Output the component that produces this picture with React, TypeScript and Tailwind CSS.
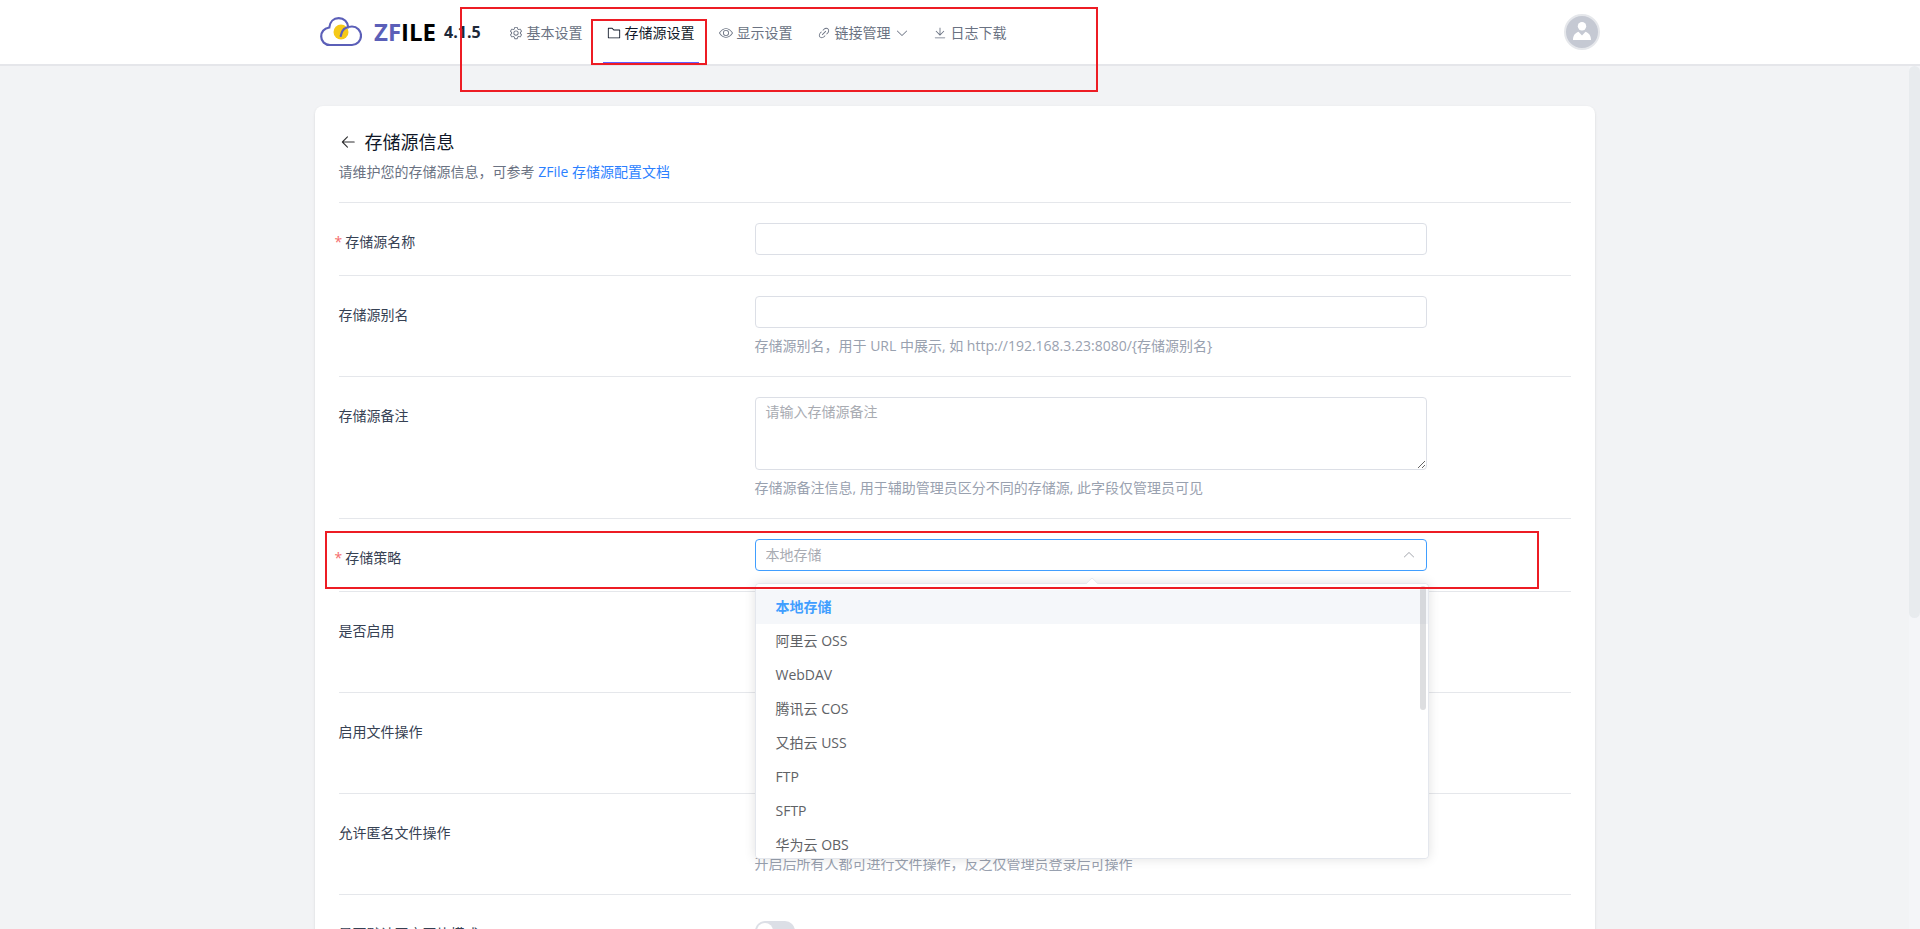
import clsx from 'clsx';
import { useState, type ReactNode } from 'react';

const icons = {
  setting:
    'M600.704 64a32 32 0 0 1 30.464 22.208l35.2 109.376c14.784 7.232 28.928 15.36 42.432 24.512l112.384-24.192a32 32 0 0 1 34.432 15.36L944.32 364.8a32 32 0 0 1-4.032 37.504l-77.12 85.12a357.12 357.12 0 0 1 0 49.024l77.12 85.248a32 32 0 0 1 4.032 37.504l-88.704 153.6a32 32 0 0 1-34.432 15.296L708.8 803.904c-13.44 9.088-27.648 17.28-42.368 24.512l-35.264 109.376A32 32 0 0 1 600.704 960H423.296a32 32 0 0 1-30.464-22.208L357.696 828.48a351.616 351.616 0 0 1-42.56-24.64l-112.32 24.256a32 32 0 0 1-34.432-15.36L79.68 659.2a32 32 0 0 1 4.032-37.504l77.12-85.248a357.12 357.12 0 0 1 0-48.896l-77.12-85.248A32 32 0 0 1 79.68 364.8l88.704-153.6a32 32 0 0 1 34.432-15.296l112.32 24.256c13.568-9.152 27.776-17.408 42.56-24.64l35.2-109.312A32 32 0 0 1 423.232 64H600.64zm-23.424 64H446.72l-36.352 113.088-24.512 11.968a294.113 294.113 0 0 0-34.816 20.096l-22.656 15.36-116.224-25.088-65.28 113.152 79.68 88.192-1.92 27.136a293.12 293.12 0 0 0 0 40.192l1.92 27.136-79.808 88.192 65.344 113.152 116.224-25.024 22.656 15.296a294.113 294.113 0 0 0 34.816 20.096l24.512 11.968L446.72 896h130.688l36.48-113.152 24.448-11.904a288.282 288.282 0 0 0 34.752-20.096l22.592-15.296 116.288 25.024 65.28-113.152-79.744-88.192 1.92-27.136a293.12 293.12 0 0 0 0-40.256l-1.92-27.136 79.808-88.128-65.344-113.152-116.288 24.96-22.592-15.232a287.616 287.616 0 0 0-34.752-20.096l-24.448-11.904L577.344 128zM512 320a192 192 0 1 1 0 384 192 192 0 0 1 0-384zm0 64a128 128 0 1 0 0 256 128 128 0 0 0 0-256z',
  folder:
    'M128 192v640h768V320H485.76L357.504 192H128zm-32-64h287.872l128.384 128H928a32 32 0 0 1 32 32v576a32 32 0 0 1-32 32H96a32 32 0 0 1-32-32V160a32 32 0 0 1 32-32z',
  view: 'M512 160c320 0 512 352 512 352S832 864 512 864 0 512 0 512s192-352 512-352zm0 64c-225.28 0-384.128 208.064-436.8 288 52.608 79.872 211.456 288 436.8 288 225.28 0 384.128-208.064 436.8-288-52.608-79.872-211.456-288-436.8-288zm0 64a224 224 0 1 1 0 448 224 224 0 0 1 0-448zm0 64a160.192 160.192 0 0 0-160 160c0 88.192 71.744 160 160 160s160-71.808 160-160-71.744-160-160-160z',
  link: 'M715.648 625.152 670.4 579.904l90.496-90.56c75.008-74.944 85.12-186.368 22.656-248.896-62.528-62.464-173.952-52.352-248.96 22.656L444.16 353.6l-45.248-45.248 90.496-90.496c100.032-99.968 251.968-110.08 339.456-22.656 87.488 87.488 77.312 239.424-22.656 339.456l-90.496 90.496zm-90.496 90.496-90.496 90.496C434.624 906.112 282.688 916.224 195.2 828.8c-87.488-87.488-77.312-239.424 22.656-339.456l90.496-90.496 45.248 45.248-90.496 90.56c-75.008 74.944-85.12 186.368-22.656 248.896 62.528 62.464 173.952 52.352 248.96-22.656l90.496-90.496 45.248 45.248zm0-362.048 45.248 45.248L398.848 670.4 353.6 625.152 625.152 353.6z',
  download:
    'M160 832h704a32 32 0 1 1 0 64H160a32 32 0 1 1 0-64zm384-253.696 236.288-236.352 45.248 45.248L508.8 704 192 387.2l45.248-45.248L480 584.704V128h64v450.304z',
  arrowDown:
    'M831.872 340.864 512 652.672 192.128 340.864a30.592 30.592 0 0 0-42.752 0 29.12 29.12 0 0 0 0 41.6L489.664 714.24a32 32 0 0 0 44.672 0l340.288-331.712a29.12 29.12 0 0 0 0-41.728 30.592 30.592 0 0 0-42.752 0z',
  back: 'M224 480h640a32 32 0 1 1 0 64H224a32 32 0 0 1 0-64zM237.248 512l265.408 265.344a32 32 0 0 1-45.312 45.312l-288-288a32 32 0 0 1 0-45.312l288-288a32 32 0 1 1 45.312 45.312L237.248 512z',
};

type IconName = keyof typeof icons;

function Icon({ name, className }: { name: IconName; className?: string }) {
  return (
    <svg
      viewBox="0 0 1024 1024"
      fill="currentColor"
      aria-hidden="true"
      className={clsx('shrink-0', className)}
    >
      <path d={icons[name]} />
    </svg>
  );
}

const navItems: { icon: IconName; label: string; active?: boolean; menu?: boolean }[] = [
  { icon: 'setting', label: '基本设置' },
  { icon: 'folder', label: '存储源设置', active: true },
  { icon: 'view', label: '显示设置' },
  { icon: 'link', label: '链接管理', menu: true },
  { icon: 'download', label: '日志下载' },
];

const strategies = [
  '本地存储',
  '阿里云 OSS',
  'WebDAV',
  '腾讯云 COS',
  '又拍云 USS',
  'FTP',
  'SFTP',
  '华为云 OBS',
];

function Logo() {
  return (
    <a href="#" className="flex items-center">
      <svg viewBox="0 0 42 30" fill="none" aria-hidden="true" className="h-[30px] w-[42px]">
        <circle cx="21" cy="15" r="7.5" fill="#f5c918" />
        <path
          d="M10 28h22c5 0 9-4 9-9.200s-4-9.300-9-9.300c-6.500 0-10.500 3.500-11.300 9.500M28.300 10.500C28 5 24 1.200 18.700 1.200c-5.200 0-8.800 3.500-9.400 9.300C4.500 11.500 1.200 14.500 1.200 19.500 1.200 24.500 5 28 10 28"
          stroke="#5b5fb8"
          strokeWidth="2.2"
          strokeLinecap="round"
        />
      </svg>
      <span className="ml-3 text-2xl font-bold text-black">
        <span className="text-[#5b5fb8]">ZF</span>ILE
      </span>
      <span className="ml-2 text-base font-bold text-gray-800">4.1.5</span>
    </a>
  );
}

function Header() {
  return (
    <header className="relative z-20 border-b-2 border-[#e5e6ea] bg-white">
      <div className="relative mx-auto flex h-16 max-w-[1280px] items-center justify-between">
        <div className="flex h-full items-center gap-6">
          <Logo />
          <nav className="flex h-full gap-4 text-sm">
            {navItems.map((item) => (
              <a
                key={item.label}
                href="#"
                className={clsx(
                  'relative flex items-center gap-1 border-b-2 px-1 pt-1',
                  item.active
                    ? 'border-indigo-500 text-gray-900'
                    : 'border-transparent text-gray-500',
                )}
              >
                <Icon name={item.icon} className="size-3.5" />
                {item.label}
                {item.menu && <Icon name="arrowDown" className="size-3.5" />}
                {item.active && (
                  <span className="pointer-events-none absolute top-[19px] -right-2 -bottom-[3px] -left-3 border-2 border-[#ed1c24]" />
                )}
              </a>
            ))}
          </nav>
        </div>
        <button
          type="button"
          aria-label="用户"
          className="size-9 overflow-hidden rounded-full border-2 border-gray-200 bg-[#c5c9d3]"
        >
          <svg viewBox="0 0 32 32" fill="#fff" aria-hidden="true">
            <circle cx="16" cy="10.300" r="4.200" />
            <path d="M7 24c0-4.500 2.200-7.200 5.500-8.300L16 19.500l3.500-3.800C22.800 16.800 25 19.500 25 24z" />
          </svg>
        </button>
        <div className="pointer-events-none absolute top-[7px] left-[140px] h-[85px] w-[638px] border-2 border-[#ed1c24]" />
      </div>
    </header>
  );
}

type RowProps = {
  id: string;
  label: string;
  required?: boolean;
  help?: string;
  marked?: boolean;
  children: ReactNode;
};

function Row({ id, label, required, help, marked, children }: RowProps) {
  return (
    <div className="relative grid grid-cols-3 gap-4 border-t border-gray-200 py-5 text-sm leading-5">
      <label htmlFor={id} className="pt-[9px] text-gray-700">
        {required && <span className="mr-[3px] -ml-1 text-[#f56c6c]">*</span>}
        {label}
      </label>
      <div className="col-span-2">
        <div className="max-w-2xl">{children}</div>
        {help && <p className="mt-2 text-gray-400">{help}</p>}
      </div>
      {marked && (
        <div className="pointer-events-none absolute top-3 right-8 bottom-0.5 -left-3.5 z-20 border-2 border-[#ed1c24]" />
      )}
    </div>
  );
}

function Switch({ id, tall }: { id: string; tall?: boolean }) {
  return (
    <div className={clsx(tall && 'min-h-[60px]')}>
      <div className="flex h-8 items-center">
        <input
          id={id}
          type="checkbox"
          role="switch"
          className="h-5 w-10 appearance-none rounded-full bg-[#dcdfe6] p-0.5 before:block before:size-4 before:rounded-full before:bg-white checked:bg-[#409eff] checked:before:ml-5"
        />
      </div>
    </div>
  );
}

function StrategySelect() {
  const [value, setValue] = useState(strategies[0]);

  return (
    <div className="relative">
      <select
        id="strategy"
        value={value}
        onChange={(e) => setValue(e.target.value)}
        className="block h-8 w-full appearance-none rounded border border-[#409eff] bg-white px-2.5 text-[#a8abb2] outline-none"
      >
        {strategies.map((name) => (
          <option key={name}>{name}</option>
        ))}
      </select>
      <Icon
        name="arrowDown"
        className="pointer-events-none absolute top-[9px] right-[11px] size-3.5 rotate-180 text-[#a8abb2]"
      />

      <div className="absolute top-11 -right-0.5 left-0 z-10 rounded border border-[#e4e7ed] bg-white shadow-[0_0_12px_rgba(0,0,0,0.12)]">
        <span className="absolute -top-[5px] left-1/2 size-2.5 -translate-x-1/2 rotate-45 rounded-tl-xs border-t border-l border-[#e4e7ed] bg-white" />
        <ul className="relative max-h-[274px] overflow-hidden rounded bg-white py-1.5">
          {strategies.map((name) => (
            <li key={name}>
              <button
                type="button"
                onClick={() => setValue(name)}
                className={clsx(
                  'block h-[34px] w-full px-5 text-left',
                  name === value ? 'bg-[#f5f7fa] font-bold text-[#409eff]' : 'text-[#606266]',
                )}
              >
                {name}
              </button>
            </li>
          ))}
        </ul>
        <span className="absolute top-0.5 right-0.5 h-[124px] w-1.5 rounded-full bg-[#909399]/30" />
      </div>
    </div>
  );
}

const inputClass =
  'block w-full rounded border border-[#dcdfe6] bg-white px-2.5 text-gray-600 outline-none placeholder:text-[#a8abb2]';

export default function App() {
  return (
    <div className="flex h-screen flex-col overflow-hidden bg-[#f2f3f5] font-['Open_Sans','Noto_Sans_CJK_SC',sans-serif]">
      <Header />
      <div className="flex min-h-0 flex-1">
        <main className="min-w-0 flex-1 overflow-y-auto [scrollbar-width:none]">
          <div className="mx-auto mt-10 mb-10 max-w-[1280px] rounded-lg bg-white px-6 py-6 shadow-sm">
            <h1 className="flex items-center gap-2 text-lg leading-6 text-gray-900">
              <button type="button" aria-label="返回" className="text-[#303133]">
                <Icon name="back" className="size-[18px]" />
              </button>
              存储源信息
            </h1>
            <p className="mt-2 mb-5 text-sm leading-5 text-gray-500">
              请维护您的存储源信息，可参考{' '}
              <a href="#" className="text-blue-500">
                ZFile 存储源配置文档
              </a>
            </p>

            <form>
              <Row id="name" label="存储源名称" required>
                <input id="name" type="text" className={clsx(inputClass, 'h-8')} />
              </Row>
              <Row
                id="key"
                label="存储源别名"
                help="存储源别名，用于 URL 中展示, 如 http://192.168.3.23:8080/{存储源别名}"
              >
                <input id="key" type="text" className={clsx(inputClass, 'h-8')} />
              </Row>
              <Row
                id="remark"
                label="存储源备注"
                help="存储源备注信息, 用于辅助管理员区分不同的存储源, 此字段仅管理员可见"
              >
                <textarea
                  id="remark"
                  placeholder="请输入存储源备注"
                  className={clsx(inputClass, 'h-[73px] resize-y py-1')}
                />
              </Row>
              <Row id="strategy" label="存储策略" required marked>
                <StrategySelect />
              </Row>
              <Row id="enable" label="是否启用">
                <Switch id="enable" tall />
              </Row>
              <Row id="file-operator" label="启用文件操作">
                <Switch id="file-operator" tall />
              </Row>
              <Row
                id="anonymous"
                label="允许匿名文件操作"
                help="开启后所有人都可进行文件操作，反之仅管理员登录后可操作"
              >
                <Switch id="anonymous" />
              </Row>
              <Row id="image-mode" label="是否默认开启图片模式">
                <Switch id="image-mode" tall />
              </Row>
            </form>
          </div>
        </main>
        <div className="w-[11px] bg-[#f4f5f8]">
          <div className="h-[64%] rounded-full bg-[#e8ebee]" />
        </div>
      </div>
    </div>
  );
}
